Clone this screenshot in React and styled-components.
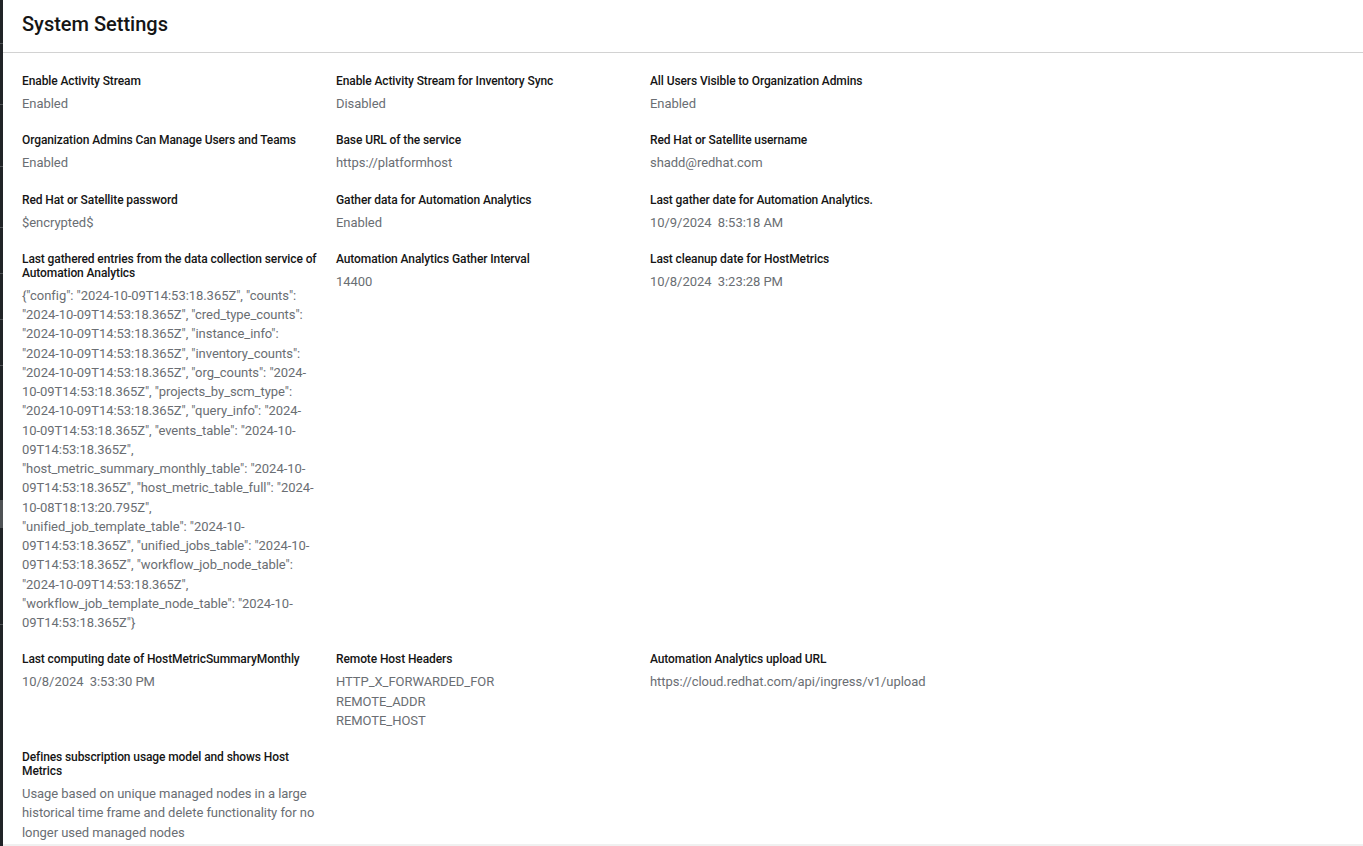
import React from "react";
import styled, { createGlobalStyle } from "styled-components";

const GlobalStyle = createGlobalStyle`
  html, body {
    margin: 0;
    padding: 0;
    background: #f0f0f0;
  }
  body {
    font-family: Roboto, "Liberation Sans", sans-serif;
    -webkit-font-smoothing: antialiased;
  }
  * {
    box-sizing: border-box;
  }
`;

const Page = styled.div`
  display: flex;
  height: 846px;
  overflow: hidden;
`;

const SideRail = styled.nav`
  width: 3px;
  flex-shrink: 0;
  display: flex;
  flex-direction: column;
  background: #212427;
`;

const RailItem = styled.div`
  height: ${(p) => p.$h}px;
  flex-shrink: 0;
  background: ${(p) => (p.$active ? "#4f5255" : "transparent")};
  border-bottom: ${(p) => (p.$sep ? "1px solid #4f5255" : "none")};
`;

const Main = styled.main`
  flex: 1;
  height: 844px;
  background: #ffffff;
  display: flex;
  flex-direction: column;
  overflow: hidden;
`;

const Header = styled.header`
  flex-shrink: 0;
  height: 53px;
  padding: 11px 19px 0;
  border-bottom: 1px solid #d2d2d2;
`;

const Title = styled.h1`
  margin: 0;
  font-family: Roboto, "Liberation Sans", sans-serif;
  font-size: 20px;
  font-weight: 500;
  line-height: 26px;
  color: #151515;
`;

const Body = styled.section`
  flex-shrink: 0;
  padding: 21px 19px;
`;

const SettingsGrid = styled.dl`
  margin: 0;
  display: grid;
  grid-template-columns: repeat(3, 295px);
  column-gap: 19px;
  row-gap: 20px;
  align-items: start;
`;

const Setting = styled.div`
  display: flex;
  flex-direction: column;
  gap: 6px;
`;

const Term = styled.dt`
  font-size: 12px;
  font-weight: 500;
  letter-spacing: -0.1px;
  line-height: 14px;
  color: #151515;
`;

const Description = styled.dd`
  margin: 0;
  font-size: 13px;
  font-weight: 400;
  letter-spacing: -0.05px;
  line-height: 19.25px;
  color: #6a6e73;
  white-space: pre-line;
`;

const rail = [
  { h: 44, sep: true },
  { h: 61, sep: true },
  { h: 62, sep: true },
  { h: 61, sep: true },
  { h: 46, sep: true },
  { h: 46, sep: true },
  { h: 46, sep: true },
  { h: 134 },
  { h: 28, active: true },
  { h: 97, sep: true },
  { h: 221 },
];

const gathered =
  '{"config": "2024-10-09T14:53:18.365Z", "counts": "2024-10-09T14:53:18.365Z", "cred_type_counts": "2024-10-09T14:53:18.365Z", "instance_info": "2024-10-09T14:53:18.365Z", "inventory_counts": "2024-10-09T14:53:18.365Z", "org_counts": "2024-10-09T14:53:18.365Z", "projects_by_scm_type": "2024-10-09T14:53:18.365Z", "query_info": "2024-10-09T14:53:18.365Z", "events_table": "2024-10-09T14:53:18.365Z", "host_metric_summary_monthly_table": "2024-10-09T14:53:18.365Z", "host_metric_table_full": "2024-10-08T18:13:20.795Z", "unified_job_template_table": "2024-10-09T14:53:18.365Z", "unified_jobs_table": "2024-10-09T14:53:18.365Z", "workflow_job_node_table": "2024-10-09T14:53:18.365Z", "workflow_job_template_node_table": "2024-10-09T14:53:18.365Z"}';

const settings = [
  ["Enable Activity Stream", "Enabled"],
  ["Enable Activity Stream for Inventory Sync", "Disabled"],
  ["All Users Visible to Organization Admins", "Enabled"],
  ["Organization Admins Can Manage Users and Teams", "Enabled"],
  ["Base URL of the service", "https://platformhost"],
  ["Red Hat or Satellite username", "shadd@redhat.com"],
  ["Red Hat or Satellite password", "$encrypted$"],
  ["Gather data for Automation Analytics", "Enabled"],
  ["Last gather date for Automation Analytics.", "10/9/2024\u00a0 8:53:18 AM"],
  ["Last gathered entries from the data collection service of Automation Analytics", gathered],
  ["Automation Analytics Gather Interval", "14400"],
  ["Last cleanup date for HostMetrics", "10/8/2024\u00a0 3:23:28 PM"],
  ["Last computing date of HostMetricSummaryMonthly", "10/8/2024\u00a0 3:53:30 PM"],
  ["Remote Host Headers", "HTTP_X_FORWARDED_FOR\nREMOTE_ADDR\nREMOTE_HOST"],
  ["Automation Analytics upload URL", "https://cloud.redhat.com/api/ingress/v1/upload"],
  [
    "Defines subscription usage model and shows Host Metrics",
    "Usage based on unique managed nodes in a large historical time frame and delete functionality for no longer used managed nodes",
  ],
];

const App = () => {
  return (
    <>
      <GlobalStyle />
      <Page>
        <SideRail>
          {rail.map((r, i) => (
            <RailItem key={i} $h={r.h} $sep={r.sep} $active={r.active} />
          ))}
        </SideRail>
        <Main>
          <Header>
            <Title>System Settings</Title>
          </Header>
          <Body>
            <SettingsGrid>
              {settings.map(([term, value]) => (
                <Setting key={term}>
                  <Term>{term}</Term>
                  <Description>{value}</Description>
                </Setting>
              ))}
            </SettingsGrid>
          </Body>
        </Main>
      </Page>
    </>
  );
};

export default App;
